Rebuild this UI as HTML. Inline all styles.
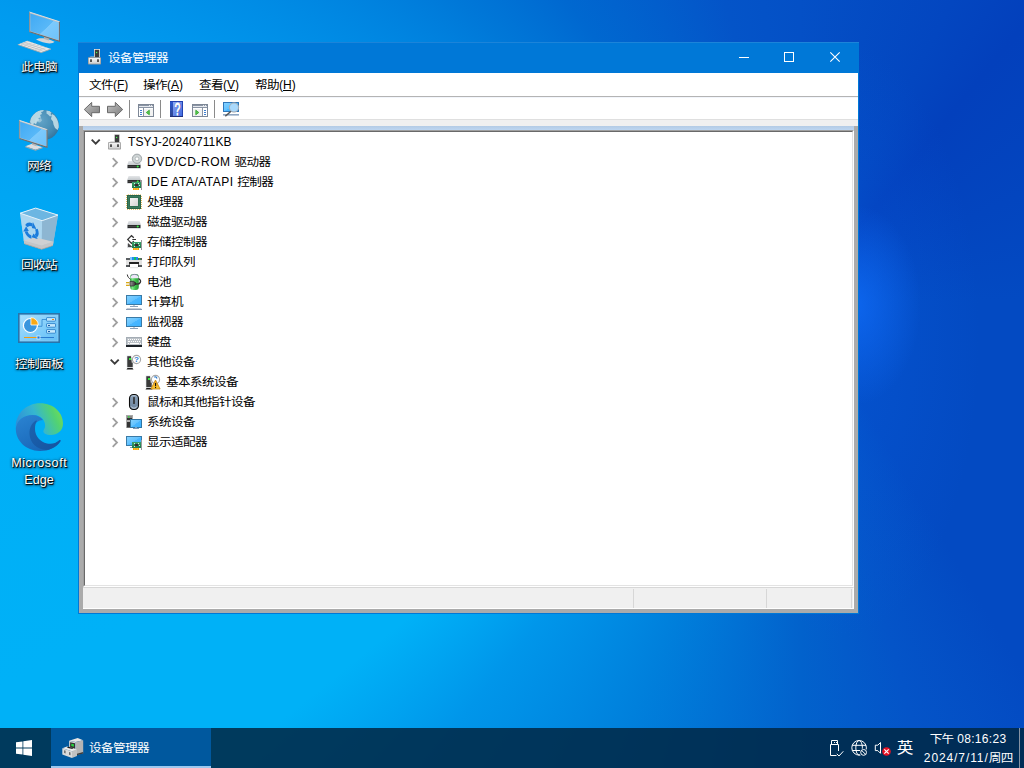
<!DOCTYPE html>
<html lang="zh-CN">
<head>
<meta charset="utf-8">
<title>设备管理器</title>
<style>
html,body{margin:0;padding:0;}
body{width:1024px;height:768px;overflow:hidden;position:relative;font-family:"Liberation Sans","Noto Sans CJK SC",sans-serif;font-size:12px;color:#000;}
.abs{position:absolute;}
svg{overflow:visible;}
#desk{position:absolute;left:0;top:0;width:1024px;height:768px;overflow:hidden;
 background:
  radial-gradient(ellipse 65px 100px at 856px 305px, rgba(14,104,242,.85), rgba(14,104,242,0) 100%),
  radial-gradient(ellipse 140px 300px at 840px 340px, rgba(8,96,225,.4), rgba(8,96,225,0) 100%),
  conic-gradient(from 0deg at 800px 300px,#0450c6 0deg,#0346c0 27deg,#0340bc 39deg,#034ac2 90deg,#034ac2 149deg,#0454c8 165deg,#0262cc 180deg,#0080dc 202deg,#0096ea 219deg,#00b1f7 231deg,#00b1f7 244deg,#00aef6 268deg,#00a6f3 277.5deg,#009cf0 289deg,#0078d8 311deg,#0068d0 322deg,#0454c8 346deg,#0450c6 360deg);
}
.dlabel{position:absolute;width:78px;left:0;text-align:center;color:#fff;font-size:12px;line-height:17px;white-space:nowrap;
 text-shadow:1px 1px 0 rgba(0,0,0,.8),1px 1px 2px rgba(0,0,0,.85),0 1px 3px rgba(0,0,0,.6),0 0 3px rgba(0,0,0,.45);}
#win{position:absolute;left:78px;top:42px;width:781px;height:572px;background:#0078d7;box-sizing:border-box;border-top:1px solid #1c84d9;}
#title{position:absolute;left:1px;top:0;width:779px;height:30px;background:#0078d7;color:#fff;}
#title .t{position:absolute;left:29px;top:0;line-height:29px;font-size:12px;}
#menu{position:absolute;left:1px;top:30px;width:779px;height:23px;background:#fff;}
#menu>span{position:absolute;top:0;line-height:22px;font-size:12px;white-space:nowrap;}
#menu u{text-decoration:underline;text-underline-offset:1px;}
#tb{position:absolute;left:1px;top:53px;width:779px;height:24px;background:#fff;border-top:1px solid #b4b4b4;border-bottom:1px solid #dfdfdf;box-sizing:border-box;box-shadow:inset 0 1px 0 #f2f5fb;}
#tb>svg{top:0}
#gap{position:absolute;left:1px;top:77px;width:779px;height:6px;background:#f0f0f0;}
#mdi{position:absolute;left:1px;top:83px;width:779px;height:487px;background:#ababab;}
#band{position:absolute;left:4px;top:0;width:771px;height:4px;background:linear-gradient(#b3cbe5,#bdd6f1);}
#tree{position:absolute;left:4px;top:4px;width:771px;height:457px;background:#fff;box-sizing:border-box;}
#tree .in{position:absolute;left:0;top:0;right:0;bottom:0;box-sizing:border-box;border-top:1px solid #a0a0a0;border-left:1px solid #a0a0a0;border-right:1px solid #fff;border-bottom:1px solid #fff;}
#tree .in:after{content:"";position:absolute;left:0;top:0;right:0;bottom:0;border-top:1px solid #696969;border-left:1px solid #696969;border-right:1px solid #e3e3e3;border-bottom:1px solid #e3e3e3;}
#status{position:absolute;left:4px;top:461px;width:771px;height:22px;background:#f0f0f0;border-top:1px solid #d7d7d7;box-sizing:border-box;border-bottom:1px solid #fff;border-right:1px solid #fff}
#status i{position:absolute;top:1px;width:1px;height:19px;background:#d7d7d7;}
.row{position:absolute;left:0;width:760px;height:20px;line-height:20px;font-size:12px;white-space:nowrap;}
.row .tx{position:absolute;top:0;}
#task{position:absolute;left:0;top:728px;width:1024px;height:40px;background:rgba(0,40,70,.87);color:#fff;}
#tbtn{position:absolute;left:51px;top:0;width:160px;height:40px;background:#00589e;}
#tbtn .ul{position:absolute;left:0;bottom:0;width:160px;height:2px;background:#9cc8f0;}
#tbtn .t{position:absolute;left:38px;top:0;line-height:40px;font-size:12px;}
.c{font-size:12.6px;letter-spacing:-.6px;position:relative;top:-0.5px;display:inline-block;transform:scaleY(.92);}
.row .tx{top:1px}
#title .t{line-height:31px}
#menu>span{line-height:24px}

</style>
</head>
<body>
<div id="desk"></div>
<!-- This PC -->
<svg class="abs" style="left:15px;top:8px" width="48" height="48" viewBox="15 8 48 48">
 <defs>
  <linearGradient id="dScr" x1="0" y1="0" x2="1" y2="1"><stop offset="0" stop-color="#40a9f3"/><stop offset=".55" stop-color="#58b8f8"/><stop offset=".56" stop-color="#7cc9fc"/><stop offset="1" stop-color="#6ec3fa"/></linearGradient>
 </defs>
 <path d="M36 39.5c4-3 14-.5 18.500 2.300c-2.500 3-12 1.500-18.500-2.300z" fill="#d4d6d8"/>
 <path d="M44 36.500l5 1.600v2.400l-5-1.600z" fill="#b2b4b6"/>
 <path d="M29.300 12L59.700 21.800V41.500L29.300 31.900Z" fill="#b9bbbd"/>
 <path d="M29.300 12L59.700 21.800" fill="none" stroke="#dcdee0" stroke-width="1"/>
 <path d="M59.400 21.800V41.300L29.500 31.800" fill="none" stroke="#6a6c6e" stroke-width="1.100"/>
 <path d="M29.500 12.200V31.800" fill="none" stroke="#8a8c8e" stroke-width=".8"/>
 <path d="M30.300 13.400L58.700 22.600V40.100L30.300 31.100Z" fill="url(#dScr)"/>
 <path d="M17.800 44.500L27.200 40.700L51 49L41.200 52.600Z" fill="#e6e7e8"/>
 <path d="M17.800 44.500L41.200 52.600L51 49" fill="none" stroke="#a9abad" stroke-width=".9"/>
 <path d="M21 44.300l8-3M24.500 45.500l8-3M28 46.700l8-3M31.500 47.900l8-3M35 49.100l8-3M38.500 50.300l8-3M23.500 42.200l22 7.600M20.600 43.400l22 7.600" stroke="#b4b6b8" stroke-width=".55" fill="none"/>
</svg>
<div class="dlabel" style="top:59px"><span class="c">此电脑</span></div>
<!-- Network -->
<svg class="abs" style="left:15px;top:107px" width="48" height="48" viewBox="15 107 48 48">
 <defs>
  <radialGradient id="dGlobe" cx=".4" cy=".35" r=".7"><stop offset="0" stop-color="#62a4c8"/><stop offset=".7" stop-color="#4489b1"/><stop offset="1" stop-color="#33729a"/></radialGradient>
 </defs>
 <circle cx="44" cy="125" r="15" fill="url(#dGlobe)"/>
 <clipPath id="gclip"><circle cx="44" cy="125" r="15"/></clipPath>
 <g clip-path="url(#gclip)" fill="#d6ebf1" opacity=".85">
  <path d="M30 122l1-4l2-3l3-3l4-2l4-.5l-1 2l-2 .5l1 2l-2 1l1 2.500l-2.500 .5l.5 2.500l-2 .5l-1 3l-2-1l-1 2l-2-1.500z" opacity=".9"/>
  <path d="M36 118l3 1l2-1l1 2.500l-2 2l-3-.5l-1 2.500l-1.500-1.500z" opacity=".55"/>
  <path d="M46.500 110.500l3 .5l2 1.500l-1 1.500l1.500 1.500l-2 1l-2-2l-1.500-1z" opacity=".85"/>
  <path d="M52 114l2.500 1.500l2.500 3.500l1.500 4l.5 4.500l-1.500 2.500l-2.500-2l-1.500-3.500l-.5-3l-2-2.500l.5-2.500z" opacity=".92"/>
 </g>
 <path d="M25.300 146.200L32 143.800L42.600 147.200L35.500 149.800Z" fill="#dcdee0"/><path d="M25.300 146.200L35.500 149.800L42.600 147.200V148.200L35.500 150.800L25.300 147.200Z" fill="#a4a6a8"/><path d="M32 142.500l4.500 1.400v2.300l-4.500-1.400z" fill="#b2b4b6"/>
 <path d="M19.200 120.300L47.300 129.700V147.500L19.200 138.600Z" fill="#b9bbbd"/>
 <path d="M19.200 120.300L47.300 129.700" fill="none" stroke="#dcdee0" stroke-width="1"/>
 <path d="M47 129.700V147.300L19.400 138.500" fill="none" stroke="#6a6c6e" stroke-width="1.100"/>
 <path d="M19.400 120.500V138.500" fill="none" stroke="#8a8c8e" stroke-width=".8"/>
 <path d="M20.200 121.700L46.300 130.500V146.100L20.200 137.800Z" fill="url(#dScr)"/>
</svg>
<div class="dlabel" style="top:158px"><span class="c">网络</span></div>
<!-- Recycle bin -->
<svg class="abs" style="left:15px;top:206px" width="48" height="48" viewBox="15 206 48 48">
 <path d="M20.100 213.200L35.600 208.100L58 215.100L52.900 245.600L41.700 249.300L24.300 243.700Z" fill="#8ec4e4"/>
 <path d="M20.100 213.200L35.600 208.100L58 215.100L42.100 220.700Z" fill="#6cb6e2"/>
 <path d="M20.100 213.200L42.100 220.700L41.700 249.300L24.300 243.700Z" fill="#abd6f0"/>
 <path d="M42.100 220.700L58 215.100L52.900 245.600L41.700 249.300Z" fill="#8db6d2"/>
 <path d="M23.600 239.800L41.800 245.300L53.400 241.600L52.900 245.600L41.700 249.300L24.300 243.700Z" fill="#c4c5c7"/>
 <path d="M23.800 240.500l11-3.300L53.300 241.800L41.800 245.400Z" fill="#cfd0d2"/><path d="M24.300 243.700L41.700 249.300L52.900 245.600" fill="none" stroke="#a39a92" stroke-width=".7"/>
 <path d="M20.100 213.200L35.600 208.100L58 215.100L42.100 220.700Z" fill="none" stroke="#e4f2fa" stroke-width="1"/>
 <g transform="translate(31.400 230.800) skewY(17) scale(1.02 1.12)"><g transform="rotate(15)"><path d="M-5.41 -1.45A5.6 5.6 0 0 1 -0.49 -5.58" fill="none" stroke="#1b7cdc" stroke-width="2.900"/><path d="M-0.74 -8.47L3.96 -4.24L-0.24 -2.69Z" fill="#1b7cdc"/></g><g transform="rotate(135)"><path d="M-5.41 -1.45A5.6 5.6 0 0 1 -0.49 -5.58" fill="none" stroke="#1b7cdc" stroke-width="2.900"/><path d="M-0.74 -8.47L3.96 -4.24L-0.24 -2.69Z" fill="#1b7cdc"/></g><g transform="rotate(255)"><path d="M-5.41 -1.45A5.6 5.6 0 0 1 -0.49 -5.58" fill="none" stroke="#1b7cdc" stroke-width="2.900"/><path d="M-0.74 -8.47L3.96 -4.24L-0.24 -2.69Z" fill="#1b7cdc"/></g></g>
</svg>
<div class="dlabel" style="top:257px"><span class="c">回收站</span></div>
<!-- Control panel -->
<svg class="abs" style="left:15px;top:305px" width="48" height="48" viewBox="15 305 48 48">
 <defs><linearGradient id="dCp" x1="0" y1="0" x2="1" y2="1"><stop offset="0" stop-color="#a8e0ff"/><stop offset="1" stop-color="#62bef6"/></linearGradient></defs>
 <rect x="18" y="313" width="42" height="30" fill="#2874ac"/>
 <rect x="20" y="315" width="38" height="26" fill="url(#dCp)"/>
 <rect x="20" y="315" width="38" height="26" fill="none" stroke="#8fd0f6" stroke-width=".8"/>
 <circle cx="30.400" cy="325.500" r="7" fill="#3a96de" stroke="#fff" stroke-width="1.2"/>
 <path d="M30.900 325V317.600A7.400 7.400 0 0 1 38.300 325Z" fill="#f9a916" stroke="#fff" stroke-width=".8"/>
 <path d="M38 326.300H42V319.500H47" fill="none" stroke="#2f86d0" stroke-width=".8"/>
 <g fill="#c4e8fd" stroke="#2f84cc" stroke-width=".9"><rect x="46.500" y="317.600" width="9" height="3.600" rx=".5"/><rect x="46.500" y="323.600" width="9" height="3.600" rx=".5"/><rect x="46.500" y="329.600" width="9" height="3.600" rx=".5"/></g>
 <rect x="52" y="319" width="2" height="1" fill="#f08a10"/><rect x="48" y="325" width="2" height="1" fill="#1c5ea8"/><rect x="48" y="331" width="2" height="1" fill="#1c5ea8"/>
 <rect x="24" y="337" width="13" height="1" fill="#f59a12"/><rect x="40" y="337" width="14" height="1" fill="#2a7cd0"/>
 <rect x="37" y="336" width="3" height="3" fill="#1f78d8" stroke="#e8f6ff" stroke-width=".7"/>
</svg>
<div class="dlabel" style="top:356px"><span class="c">控制面板</span></div>
<!-- Edge -->
<svg class="abs" style="left:15px;top:403px" width="48" height="48" viewBox="0 0 48 48">
 <defs>
  <linearGradient id="eA" x1="0" y1=".6" x2="1" y2=".3"><stop offset="0" stop-color="#2f8fd8"/><stop offset=".45" stop-color="#35b6d0"/><stop offset=".8" stop-color="#52d273"/><stop offset="1" stop-color="#73dd55"/></linearGradient>
  <linearGradient id="eB" x1="0" y1="0" x2=".6" y2="1"><stop offset="0" stop-color="#2b84d2"/><stop offset="1" stop-color="#1866b8"/></linearGradient>
  <linearGradient id="eC" x1="0" y1="0" x2="1" y2="1"><stop offset="0" stop-color="#1c63ae"/><stop offset="1" stop-color="#1553a0"/></linearGradient>
 </defs>
 <path d="M.8 25C.3 11 11 .3 25 .3C39 .3 48 10 48 20.500C48 28 42 32 36 32C31 32 27.500 30 28.500 27.500C29.500 25.500 30.500 24 30 21C29 15 24 12 18 12C9 12 2 17 .8 25Z" fill="url(#eA)"/>
 <path d="M.8 25C2 17 9 12 17.500 12C22 12 26 14 28 17C24 17 19 20 18 26C17 34 23 42 33 42C38 42 42 40 44 37.500C45 36.500 46 37.500 45.300 38.500C41 45 33 48.200 24.500 48C11 47.500 .5 38 .8 25Z" fill="url(#eB)"/>
 <path d="M20.500 17.800C17 20 14 25 14.500 31C15 40 22 46.500 31 47C37 46.500 42 43 45.300 38.500C46 37.500 45 36.500 44 37.500C41 40 37 41.500 32 40.500C25 39 20 33 20 26C20 22.500 20.500 20 22 18C21.500 17.500 21 17.500 20.500 17.800Z" fill="url(#eC)"/>
</svg>
<div class="dlabel" style="top:455px"><span style="font-size:12.600px;letter-spacing:.55px;margin-left:.5px">Microsoft</span><br><span style="font-size:12.600px;letter-spacing:.05px">Edge</span></div>

<div id="win">
 <div id="title">
  <svg class="abs" style="left:7px;top:5px" width="16" height="18" viewBox="0 0 16 18"><rect x="8" y="1" width="6" height="8.5" fill="#e8e8e8"/><rect x="8.8" y="1.8" width="4.4" height="7.5" fill="#3c3c3c"/><rect x="10" y="3.900" width="1.200" height="1.200" fill="#48ff50"/><path d="M2 9.5l3-1h3v1z" fill="#bdbdbd"/><rect x="2" y="9.3" width="13" height="7.2" rx=".8" fill="#9c9c9c"/><rect x="2.8" y="10" width="11.4" height="5.6" fill="url(#gBase)"/><rect x="4.2" y="11.3" width="1.6" height="2.7" fill="#333"/><rect x="11.2" y="11.3" width="1.6" height="2.7" fill="#333"/></svg>
  <span class="t"><span class="c">设备管理器</span></span>
  <svg class="abs" style="left:646px;top:0" width="133" height="30" viewBox="725 43 133 30"><g fill="none" stroke="#fff" stroke-width="1"><path d="M739 57.500H749"/><rect x="784.500" y="52.500" width="9" height="9"/><path d="M830.300 52.300L839.700 61.700M839.700 52.300L830.300 61.700" stroke-width="1.100"/></g></svg>
 </div>
 <div id="menu">
  <span style="left:10px"><span class="c">文件</span>(<u>F</u>)</span>
  <span style="left:64px"><span class="c">操作</span>(<u>A</u>)</span>
  <span style="left:120px"><span class="c">查看</span>(<u>V</u>)</span>
  <span style="left:176px"><span class="c">帮助</span>(<u>H</u>)</span>
 </div>
 <div id="tb">
<svg class="abs" style="left:0;top:0" width="200" height="23" viewBox="79 97 200 23">
 <!-- back / forward arrows -->
 <path d="M84.3 109.5L91.7 102.4V106.3H99.5V112.7H91.7V116.6Z" fill="url(#gArr)" stroke="#6a6a6a" stroke-width="1" stroke-linejoin="round"/>
 <path d="M122.7 109.5L115.3 102.4V106.3H107.5V112.7H115.3V116.6Z" fill="url(#gArr)" stroke="#6a6a6a" stroke-width="1" stroke-linejoin="round"/>
 <rect x="129" y="100" width="1" height="18" fill="#8a8a8a"/>
 <rect x="160" y="100" width="1" height="18" fill="#8a8a8a"/>
 <rect x="214" y="100" width="1" height="18" fill="#8a8a8a"/>
 <!-- show/hide console tree -->
 <g>
  <rect x="138.5" y="104.5" width="15" height="12" fill="#fff" stroke="#7d8796"/>
  <rect x="139" y="105" width="14" height="3" fill="#e6e9ee"/>
  <rect x="139" y="105" width="10" height="1" fill="#8a94a4"/><rect x="150" y="105" width="1" height="1" fill="#8a94a4"/><rect x="152" y="105" width="1" height="1" fill="#8a94a4"/>
  <rect x="139" y="107" width="14" height="1" fill="#8a94a4"/>
  <rect x="143" y="108" width="1" height="8" fill="#8a94a4"/>
  <rect x="140" y="110" width="2" height="1" fill="#3f7fd0"/><rect x="140" y="112" width="2" height="1" fill="#3f7fd0"/><rect x="140" y="114" width="2" height="1" fill="#3f7fd0"/>
  <rect x="144" y="109" width="9" height="7" fill="#f2f2f2"/>
  <path d="M149.300 110.200V114.800L146.300 112.500Z" fill="#5cc850" stroke="#2da528" stroke-width=".8" stroke-linejoin="round"/>
 </g>
 <g>
  <rect x="192.5" y="104.5" width="15" height="12" fill="#fff" stroke="#7d8796"/>
  <rect x="193" y="105" width="14" height="3" fill="#e6e9ee"/>
  <rect x="193" y="105" width="10" height="1" fill="#8a94a4"/><rect x="204" y="105" width="1" height="1" fill="#8a94a4"/><rect x="206" y="105" width="1" height="1" fill="#8a94a4"/>
  <rect x="193" y="107" width="14" height="1" fill="#8a94a4"/>
  <rect x="202" y="108" width="1" height="8" fill="#8a94a4"/>
  <rect x="204" y="110" width="2" height="1" fill="#3f7fd0"/><rect x="204" y="112" width="2" height="1" fill="#3f7fd0"/><rect x="204" y="114" width="2" height="1" fill="#3f7fd0"/>
  <rect x="193" y="109" width="9" height="7" fill="#f2f2f2"/>
  <path d="M195.800 110.200V114.800L198.800 112.500Z" fill="#5cc850" stroke="#2da528" stroke-width=".8" stroke-linejoin="round"/>
 </g>
 <!-- help -->
 <rect x="170" y="101" width="13" height="16" fill="#2242b2"/>
 <rect x="173" y="102" width="9" height="14" fill="url(#gHelp)"/>
 <rect x="170" y="102" width="3" height="14" fill="url(#gSpine)"/>
 <rect x="170" y="116" width="13" height="1" fill="#1f2f78"/>
 <text transform="translate(178.200 115.300) scale(.7 1.12)" font-size="14.300" text-anchor="middle" fill="#16225c" opacity=".8" font-family="Liberation Sans,sans-serif">?</text>
 <text transform="translate(177.500 114.800) scale(.7 1.12)" font-size="14.300" text-anchor="middle" fill="#fff" stroke="#fff" stroke-width=".8" font-family="Liberation Sans,sans-serif">?</text>
 <!-- scan -->
 <rect x="223.5" y="102.5" width="15" height="9" fill="url(#gScr)" stroke="#2f76b8"/>
 <rect x="223" y="114" width="16" height="1.6" fill="#8ea6c2"/>
 <path d="M231 111.2L225.3 116.3" stroke="#555" stroke-width="1.5" fill="none"/>
 <circle cx="234" cy="107.500" r="4.600" fill="#a9d9fc" stroke="#a9acb0" stroke-width="1"/>
</svg>

 </div>
 <div id="gap"></div>
 <div id="mdi">
  <div id="band"></div>
  <div id="tree"><div class="in"></div>
<svg width="0" height="0" style="position:absolute"><defs>
<linearGradient id="gTop" x1="0" y1="0" x2="0" y2="1"><stop offset="0" stop-color="#e4e6e8"/><stop offset="1" stop-color="#c4c8cc"/></linearGradient>
<linearGradient id="gPcb" x1="0" y1="0" x2="0" y2="1"><stop offset="0" stop-color="#3aa06a"/><stop offset="1" stop-color="#1f7a4a"/></linearGradient>
<linearGradient id="gScr" x1="0" y1="0" x2="1" y2="1"><stop offset="0" stop-color="#86d2ff"/><stop offset=".5" stop-color="#62c2ff"/><stop offset=".52" stop-color="#48b6ff"/><stop offset="1" stop-color="#3cb2ff"/></linearGradient>
<linearGradient id="gBase" x1="0" y1="0" x2="0" y2="1"><stop offset="0" stop-color="#f4f4f4"/><stop offset="1" stop-color="#d2d2d2"/></linearGradient>
<radialGradient id="gDisc"><stop offset="0" stop-color="#f4f6f6"/><stop offset=".6" stop-color="#d4dada"/><stop offset="1" stop-color="#c2c8ca"/></radialGradient>
<linearGradient id="gDie" x1="0" y1="0" x2="1" y2="1"><stop offset="0" stop-color="#f6f4f4"/><stop offset="1" stop-color="#d6d4d4"/></linearGradient>
<linearGradient id="gBat" x1="0" y1="0" x2="1" y2="0"><stop offset="0" stop-color="#2fa83e"/><stop offset=".25" stop-color="#7fe888"/><stop offset=".6" stop-color="#3cc04a"/><stop offset="1" stop-color="#2a9838"/></linearGradient>
<linearGradient id="gPlug" x1="0" y1="0" x2="1" y2="0"><stop offset="0" stop-color="#9a9a9a"/><stop offset="1" stop-color="#2a2a2a"/></linearGradient>
<linearGradient id="gWarn" x1="0" y1="0" x2="0" y2="1"><stop offset="0" stop-color="#f0a010"/><stop offset="1" stop-color="#f8c838"/></linearGradient>
<linearGradient id="gMouse" x1="0" y1="0" x2="0" y2="1"><stop offset="0" stop-color="#8aa0b8"/><stop offset="1" stop-color="#6c849e"/></linearGradient>
<linearGradient id="gArr" x1="0" y1="0" x2="1" y2="1"><stop offset="0" stop-color="#c2c2c2"/><stop offset="1" stop-color="#7c7c7c"/></linearGradient>
<linearGradient id="gHelp" x1="0" y1="0" x2="1" y2="1"><stop offset="0" stop-color="#8ea8f0"/><stop offset="1" stop-color="#406ae0"/></linearGradient>
<linearGradient id="gSpine" x1="0" y1="0" x2="0" y2="1"><stop offset="0" stop-color="#2a58d0"/><stop offset="1" stop-color="#2f4690"/></linearGradient>
</defs></svg>
<div class="row" style="top:1px"><svg class="abs" style="left:8px;top:7px" width="10" height="7" viewBox="0 0 10 7"><path d="M.7 1.6L4.700 5.600L8.700 1.600" fill="none" stroke="#3c3c3c" stroke-width="1.900"/></svg><svg class="abs ic" style="left:23px;top:2px" width="16" height="18" viewBox="0 0 16 18"><rect x="8" y="1" width="6" height="8.5" fill="#e8e8e8"/><rect x="8.8" y="1.8" width="4.4" height="7.5" fill="#3c3c3c"/><rect x="10" y="3.900" width="1.200" height="1.200" fill="#48ff50"/><path d="M2 9.5l3-1h3v1z" fill="#bdbdbd"/><rect x="2" y="9.3" width="13" height="7.2" rx=".8" fill="#9c9c9c"/><rect x="2.8" y="10" width="11.4" height="5.6" fill="url(#gBase)"/><rect x="4.2" y="11.3" width="1.6" height="2.7" fill="#333"/><rect x="11.2" y="11.3" width="1.6" height="2.7" fill="#333"/></svg><span class="tx" style="left:45px"><span style="letter-spacing:.12px">TSYJ-20240711KB</span></span></div>
<div class="row" style="top:21px"><svg class="abs" style="left:29px;top:6px" width="6" height="11" viewBox="0 0 6 11"><path d="M.7 1.200L5 5.500L.7 9.800" fill="none" stroke="#a0a0a0" stroke-width="1.800"/></svg><svg class="abs ic" style="left:43px;top:2px" width="16" height="18" viewBox="0 0 16 18"><path d="M2.600 8h11l1.400 4h-13.800z" fill="url(#gTop)"/><rect x="1" y="12" width="14" height="3.700" rx=".6" fill="#d0d4d8"/><rect x="1.600" y="12" width="12.800" height="3" fill="#2b2b2b"/><rect x="2.200" y="13.2" width="8" height=".6" fill="#555"/><circle cx="11.700" cy="13.5" r="1.100" fill="#3be84a"/><circle cx="11" cy="5.8" r="4.7" fill="url(#gDisc)" stroke="#969ca0" stroke-width=".8"/><circle cx="11" cy="5.8" r="2" fill="none" stroke="#a4aaae" stroke-width=".7"/><circle cx="11" cy="5.8" r="1.1" fill="#fff"/></svg><span class="tx" style="left:64px"><span style="letter-spacing:.56px">DVD/CD-ROM </span><span class="c">驱动器</span></span></div>
<div class="row" style="top:41px"><svg class="abs" style="left:29px;top:6px" width="6" height="11" viewBox="0 0 6 11"><path d="M.7 1.200L5 5.500L.7 9.800" fill="none" stroke="#a0a0a0" stroke-width="1.800"/></svg><svg class="abs ic" style="left:43px;top:2px" width="16" height="18" viewBox="0 0 16 18"><path d="M2.600 3h11l1.400 4h-13.800z" fill="url(#gTop)"/><rect x="1" y="7" width="14" height="3.700" rx=".6" fill="#d0d4d8"/><rect x="1.600" y="7" width="12.800" height="3" fill="#2b2b2b"/><rect x="2.200" y="8.2" width="8" height=".6" fill="#555"/><circle cx="11.700" cy="8.5" r="1.100" fill="#3be84a"/><rect x="15" y="7" width="1" height="10" fill="#9a9a9a"/><rect x="6" y="9" width="9" height="6" fill="url(#gPcb)"/><rect x="9" y="11" width="3" height="2" fill="#3a2a30"/><rect x="8" y="10" width="1" height="1" fill="#d8e8dc"/><rect x="12" y="10" width="1" height="1" fill="#d8e8dc"/><rect x="8" y="13" width="1" height="1" fill="#d8e8dc"/><rect x="13" y="12" width="1" height="1" fill="#d8e8dc"/><rect x="7" y="15" width="6" height="2" fill="#f5a800"/><path d="M8.500 15v2M10 15v2M11.500 15v2" stroke="#fbd070" stroke-width=".5"/></svg><span class="tx" style="left:64px"><span style="letter-spacing:.46px">IDE ATA/ATAPI </span><span class="c">控制器</span></span></div>
<div class="row" style="top:61px"><svg class="abs" style="left:29px;top:6px" width="6" height="11" viewBox="0 0 6 11"><path d="M.7 1.200L5 5.500L.7 9.800" fill="none" stroke="#a0a0a0" stroke-width="1.800"/></svg><svg class="abs ic" style="left:43px;top:2px" width="16" height="18" viewBox="0 0 16 18"><rect x="1.8" y="1.2" width="1" height="1" rx=".5" fill="#d9a32a"/><rect x="1" y="15.8" width="1" height="1" rx=".5" fill="#d9a32a"/><rect x="0" y="2" width="1" height="1" rx=".5" fill="#d9a32a"/><rect x="15" y="3" width="1" height="1" rx=".5" fill="#d9a32a"/><rect x="3.8" y="1.2" width="1" height="1" rx=".5" fill="#d9a32a"/><rect x="3" y="15.8" width="1" height="1" rx=".5" fill="#d9a32a"/><rect x="0" y="4" width="1" height="1" rx=".5" fill="#d9a32a"/><rect x="15" y="5" width="1" height="1" rx=".5" fill="#d9a32a"/><rect x="5.8" y="1.2" width="1" height="1" rx=".5" fill="#d9a32a"/><rect x="5" y="15.8" width="1" height="1" rx=".5" fill="#d9a32a"/><rect x="0" y="6" width="1" height="1" rx=".5" fill="#d9a32a"/><rect x="15" y="7" width="1" height="1" rx=".5" fill="#d9a32a"/><rect x="7.8" y="1.2" width="1" height="1" rx=".5" fill="#d9a32a"/><rect x="7" y="15.8" width="1" height="1" rx=".5" fill="#d9a32a"/><rect x="0" y="8" width="1" height="1" rx=".5" fill="#d9a32a"/><rect x="15" y="9" width="1" height="1" rx=".5" fill="#d9a32a"/><rect x="9.8" y="1.2" width="1" height="1" rx=".5" fill="#d9a32a"/><rect x="9" y="15.8" width="1" height="1" rx=".5" fill="#d9a32a"/><rect x="0" y="10" width="1" height="1" rx=".5" fill="#d9a32a"/><rect x="15" y="11" width="1" height="1" rx=".5" fill="#d9a32a"/><rect x="11.8" y="1.2" width="1" height="1" rx=".5" fill="#d9a32a"/><rect x="11" y="15.8" width="1" height="1" rx=".5" fill="#d9a32a"/><rect x="0" y="12" width="1" height="1" rx=".5" fill="#d9a32a"/><rect x="15" y="13" width="1" height="1" rx=".5" fill="#d9a32a"/><rect x="13.8" y="1.2" width="1" height="1" rx=".5" fill="#d9a32a"/><rect x="13" y="15.8" width="1" height="1" rx=".5" fill="#d9a32a"/><rect x="0" y="14" width="1" height="1" rx=".5" fill="#d9a32a"/><rect x="15" y="15" width="1" height="1" rx=".5" fill="#d9a32a"/><rect x="1" y="2" width="14" height="14" fill="#2a6449"/><rect x="2" y="3" width="12" height="12" fill="#3a7a5c"/><rect x="3" y="4" width="10" height="10" fill="#2f6e51"/><rect x="4" y="5" width="8" height="8" fill="url(#gDie)"/></svg><span class="tx" style="left:64px"><span class="c">处理器</span></span></div>
<div class="row" style="top:81px"><svg class="abs" style="left:29px;top:6px" width="6" height="11" viewBox="0 0 6 11"><path d="M.7 1.200L5 5.500L.7 9.800" fill="none" stroke="#a0a0a0" stroke-width="1.800"/></svg><svg class="abs ic" style="left:43px;top:2px" width="16" height="18" viewBox="0 0 16 18"><path d="M2.600 8h11l1.400 4h-13.800z" fill="url(#gTop)"/><rect x="1" y="12" width="14" height="3.700" rx=".6" fill="#d0d4d8"/><rect x="1.600" y="12" width="12.800" height="3" fill="#2b2b2b"/><rect x="2.200" y="13.2" width="8" height=".6" fill="#555"/><circle cx="11.700" cy="13.5" r="1.100" fill="#3be84a"/></svg><span class="tx" style="left:64px"><span class="c">磁盘驱动器</span></span></div>
<div class="row" style="top:101px"><svg class="abs" style="left:29px;top:6px" width="6" height="11" viewBox="0 0 6 11"><path d="M.7 1.200L5 5.500L.7 9.800" fill="none" stroke="#a0a0a0" stroke-width="1.800"/></svg><svg class="abs ic" style="left:43px;top:2px" width="16" height="18" viewBox="0 0 16 18"><path d="M7.800 4.800L5.500 2.700L1.700 6.500L5.500 10.300L7.800 8.200M6.300 6.500H10" fill="none" stroke="#333" stroke-width="1.200"/><path d="M2 10l4.500 4H2z" fill="#4a4a4a"/><path d="M1.500 10.500v4h5" fill="none" stroke="#c8ccd0" stroke-width=".8"/><rect x="15" y="7" width="1" height="10" fill="#9a9a9a"/><rect x="6" y="9" width="9" height="6" fill="url(#gPcb)"/><rect x="9" y="11" width="3" height="2" fill="#3a2a30"/><rect x="8" y="10" width="1" height="1" fill="#d8e8dc"/><rect x="12" y="10" width="1" height="1" fill="#d8e8dc"/><rect x="8" y="13" width="1" height="1" fill="#d8e8dc"/><rect x="13" y="12" width="1" height="1" fill="#d8e8dc"/><rect x="7" y="15" width="6" height="2" fill="#f5a800"/><path d="M8.500 15v2M10 15v2M11.500 15v2" stroke="#fbd070" stroke-width=".5"/></svg><span class="tx" style="left:64px"><span class="c">存储控制器</span></span></div>
<div class="row" style="top:121px"><svg class="abs" style="left:29px;top:6px" width="6" height="11" viewBox="0 0 6 11"><path d="M.7 1.200L5 5.500L.7 9.800" fill="none" stroke="#a0a0a0" stroke-width="1.800"/></svg><svg class="abs ic" style="left:43px;top:2px" width="16" height="18" viewBox="0 0 16 18"><rect x="4" y="4" width="8" height="3.5" fill="#1e8df0"/><rect x="4" y="4" width="2" height="3.5" fill="#7cc8ff"/><rect x="8" y="4" width="2" height="3.5" fill="#15c060"/><rect x="0" y="5" width="4" height="2" fill="#5a5e62"/><rect x="12" y="5" width="4" height="2" fill="#5a5e62"/><rect x="0" y="7" width="16" height="6" fill="#e2e2e2"/><rect x="0" y="12" width="16" height="2" fill="#54585c"/><rect x="13" y="5.5" width="1.4" height="1.4" fill="#1ee030"/><rect x="3" y="9" width="10" height="2.2" fill="#222"/><path d="M3.5 11h9v3h-9z" fill="#222"/><rect x="4" y="11" width="8" height="4" fill="#fff"/><rect x="4" y="14.5" width="8" height=".6" fill="#ccc"/></svg><span class="tx" style="left:64px"><span class="c">打印队列</span></span></div>
<div class="row" style="top:141px"><svg class="abs" style="left:29px;top:6px" width="6" height="11" viewBox="0 0 6 11"><path d="M.7 1.200L5 5.500L.7 9.800" fill="none" stroke="#a0a0a0" stroke-width="1.800"/></svg><svg class="abs ic" style="left:43px;top:2px" width="16" height="18" viewBox="0 0 16 18"><path d="M1.3 1.5C1.5 4 3 5 5 7" fill="none" stroke="#333" stroke-width="1"/><rect x="4.2" y="1" width="8.6" height="16" rx="3" fill="url(#gBat)"/><path d="M4.6 4.2c0-4 7.8-4 7.8 0v1H4.6z" fill="#eee8f8"/><path d="M5 2.6c2-1.6 5-1.6 7 0" fill="none" stroke="#77739a" stroke-width=".8"/><path d="M12.5 5.5c3.5 2 2.5 6.5-3.5 5.5" fill="none" stroke="#333" stroke-width="1.3"/><path d="M4 8.3h3.5l2.5 1.7v1.2l-2.5 1.8H4z" fill="url(#gPlug)" stroke="#222" stroke-width=".7"/><rect x="0" y="9" width="3.5" height="1.3" fill="#d8a818"/><rect x="0" y="11.7" width="3.5" height="1.3" fill="#d8a818"/></svg><span class="tx" style="left:64px"><span class="c">电池</span></span></div>
<div class="row" style="top:161px"><svg class="abs" style="left:29px;top:6px" width="6" height="11" viewBox="0 0 6 11"><path d="M.7 1.200L5 5.500L.7 9.800" fill="none" stroke="#a0a0a0" stroke-width="1.800"/></svg><svg class="abs ic" style="left:43px;top:2px" width="16" height="18" viewBox="0 0 16 18"><rect x=".5" y="2.5" width="15" height="9" fill="url(#gScr)" stroke="#3a7aa6"/><rect x="7" y="12" width="2" height="1" fill="#c8d0d8"/><rect x="4" y="13" width="8" height="1" fill="#8aa0b8"/><path d="M1 15l-1 1.5h16L15 15z" fill="#c4ccd6"/><rect x="0" y="16" width="16" height="1" fill="#8c9cb2"/></svg><span class="tx" style="left:64px"><span class="c">计算机</span></span></div>
<div class="row" style="top:181px"><svg class="abs" style="left:29px;top:6px" width="6" height="11" viewBox="0 0 6 11"><path d="M.7 1.200L5 5.500L.7 9.800" fill="none" stroke="#a0a0a0" stroke-width="1.800"/></svg><svg class="abs ic" style="left:43px;top:2px" width="16" height="18" viewBox="0 0 16 18"><rect x=".5" y="4.5" width="15" height="9" fill="url(#gScr)" stroke="#3a7aa6"/><rect x="7" y="14" width="2" height="1" fill="#c8d0d8"/><rect x="4" y="15" width="8" height="1" fill="#8aa0b8"/></svg><span class="tx" style="left:64px"><span class="c">监视器</span></span></div>
<div class="row" style="top:201px"><svg class="abs" style="left:29px;top:6px" width="6" height="11" viewBox="0 0 6 11"><path d="M.7 1.200L5 5.500L.7 9.800" fill="none" stroke="#a0a0a0" stroke-width="1.800"/></svg><svg class="abs ic" style="left:43px;top:2px" width="16" height="18" viewBox="0 0 16 18"><rect x="0" y="4" width="16" height="10" fill="#a4acb4"/><rect x="1" y="5" width="14" height="7" fill="#bcc2c8"/><rect x="2" y="6" width="1" height="1" fill="#fff"/><rect x="4" y="6" width="1" height="1" fill="#fff"/><rect x="6" y="6" width="1" height="1" fill="#fff"/><rect x="8" y="6" width="1" height="1" fill="#fff"/><rect x="10" y="6" width="1" height="1" fill="#fff"/><rect x="12" y="6" width="1" height="1" fill="#fff"/><rect x="14" y="6" width="1" height="1" fill="#fff"/><rect x="2" y="8" width="1" height="1" fill="#fff"/><rect x="3" y="8" width="1" height="1" fill="#fff"/><rect x="5" y="8" width="1" height="1" fill="#fff"/><rect x="7" y="8" width="1" height="1" fill="#fff"/><rect x="9" y="8" width="1" height="1" fill="#fff"/><rect x="11" y="8" width="1" height="1" fill="#fff"/><rect x="13" y="8" width="1" height="1" fill="#fff"/><rect x="2" y="10" width="1" height="1" fill="#fff"/><rect x="4" y="10" width="1" height="1" fill="#fff"/><rect x="6" y="10" width="1" height="1" fill="#fff"/><rect x="8" y="10" width="1" height="1" fill="#fff"/><rect x="10" y="10" width="1" height="1" fill="#fff"/><rect x="12" y="10" width="1" height="1" fill="#fff"/><rect x="14" y="10" width="1" height="1" fill="#fff"/><rect x="4" y="10" width="8" height="1" fill="#fff"/><rect x="0" y="12" width="16" height="2" fill="#1c2228"/></svg><span class="tx" style="left:64px"><span class="c">键盘</span></span></div>
<div class="row" style="top:221px"><svg class="abs" style="left:27px;top:7px" width="10" height="7" viewBox="0 0 10 7"><path d="M.7 1.6L4.700 5.600L8.700 1.600" fill="none" stroke="#3c3c3c" stroke-width="1.900"/></svg><svg class="abs ic" style="left:43px;top:2px" width="16" height="18" viewBox="0 0 16 18"><rect x=".7" y="2.5" width="6.6" height="12" fill="#dfe3e8"/><path d="M1.3 3.2h5.4v11H1.3z" fill="#3a3a3a"/><rect x="3" y="5" width="2.2" height="2" fill="#35e83c"/><path d="M1.5 15h5l1 1.5h-7z" fill="#1e1e1e"/><path d="M5 2.5h4v6l-3.2 1.2z" fill="#fff"/><circle cx="10.5" cy="6.5" r="4.1" fill="#fff" stroke="#a8a8a8" stroke-width="1.100"/><text x="10.5" y="9.3" font-size="8" font-weight="bold" text-anchor="middle" fill="#2b7bd0" font-family="Liberation Sans,sans-serif">?</text></svg><span class="tx" style="left:64px"><span class="c">其他设备</span></span></div>
<div class="row" style="top:241px"><svg class="abs ic" style="left:62px;top:2px" width="16" height="18" viewBox="0 0 16 18"><rect x=".7" y="2.5" width="6.6" height="12" fill="#dfe3e8"/><path d="M1.3 3.2h5.4v11H1.3z" fill="#3a3a3a"/><rect x="3" y="5" width="2.2" height="2" fill="#35e83c"/><path d="M1.5 15h5l1 1.5h-7z" fill="#1e1e1e"/><path d="M5 2.5h4v6l-3.2 1.2z" fill="#fff"/><circle cx="10.5" cy="6.5" r="4.1" fill="#fff" stroke="#a8a8a8" stroke-width="1.100"/><path d="M9.3 4.3c1.2-1 2.8-.3 2.4 1.4" fill="none" stroke="#2b7bd0" stroke-width="1.2"/><path d="M10.5 7l4.6 9H5.9z" fill="url(#gWarn)" stroke="#c08410" stroke-width=".8" stroke-linejoin="round"/><rect x="10" y="10" width="1.1" height="3.2" fill="#111"/><rect x="10" y="14" width="1.1" height="1.1" fill="#111"/></svg><span class="tx" style="left:83px"><span class="c">基本系统设备</span></span></div>
<div class="row" style="top:261px"><svg class="abs" style="left:29px;top:6px" width="6" height="11" viewBox="0 0 6 11"><path d="M.7 1.200L5 5.500L.7 9.800" fill="none" stroke="#a0a0a0" stroke-width="1.800"/></svg><svg class="abs ic" style="left:43px;top:2px" width="16" height="18" viewBox="0 0 16 18"><rect x="3.5" y="1.5" width="9" height="15" rx="4" fill="url(#gMouse)" stroke="#0a0a0a" stroke-width="1.1"/><path d="M5 13.5c1.5 2.2 4.5 2.2 6 0" fill="none" stroke="#e8eef4" stroke-width=".8"/><rect x="7.200" y="4" width="1.600" height="7" rx=".6" fill="#2c2c2c"/><path d="M5.500 3.500c1.200-1.300 3.800-1.300 5 0" fill="none" stroke="#c4d2e0" stroke-width=".7"/></svg><span class="tx" style="left:64px"><span class="c">鼠标和其他指针设备</span></span></div>
<div class="row" style="top:281px"><svg class="abs" style="left:29px;top:6px" width="6" height="11" viewBox="0 0 6 11"><path d="M.7 1.200L5 5.500L.7 9.800" fill="none" stroke="#a0a0a0" stroke-width="1.800"/></svg><svg class="abs ic" style="left:43px;top:2px" width="16" height="18" viewBox="0 0 16 18"><rect x="0" y="2" width="7" height="13" fill="#a8a8a8"/><rect x="1" y="3" width="5" height="11.5" fill="#333"/><rect x="1" y="3" width="5" height="2" fill="#8a8a8a"/><rect x="1" y="7" width="5" height="2" fill="#b0b0b0"/><rect x="2" y="3.2" width="1.4" height="1.4" fill="#30e838"/><rect x="4.5" y="6.5" width="11" height="8" fill="url(#gScr)" stroke="#2f76a4"/><rect x="9" y="14.500" width="2" height=".6" fill="#c8d0d8"/><rect x="7" y="15" width="6" height=".9" fill="#6f8cb0"/></svg><span class="tx" style="left:64px"><span class="c">系统设备</span></span></div>
<div class="row" style="top:301px"><svg class="abs" style="left:29px;top:6px" width="6" height="11" viewBox="0 0 6 11"><path d="M.7 1.200L5 5.500L.7 9.800" fill="none" stroke="#a0a0a0" stroke-width="1.800"/></svg><svg class="abs ic" style="left:43px;top:2px" width="16" height="18" viewBox="0 0 16 18"><rect x=".5" y="3.5" width="15" height="9" fill="url(#gScr)" stroke="#3a7aa6"/><rect x="7" y="13" width="2" height="1" fill="#c8d0d8"/><rect x="4" y="14" width="8" height="1" fill="#8aa0b8"/><rect x="5" y="8" width="11" height="8" fill="#fff" opacity=".0"/><rect x="15" y="7" width="1" height="10" fill="#9a9a9a"/><rect x="6" y="9" width="9" height="6" fill="url(#gPcb)"/><rect x="9" y="11" width="3" height="2" fill="#3a2a30"/><rect x="8" y="10" width="1" height="1" fill="#d8e8dc"/><rect x="12" y="10" width="1" height="1" fill="#d8e8dc"/><rect x="8" y="13" width="1" height="1" fill="#d8e8dc"/><rect x="13" y="12" width="1" height="1" fill="#d8e8dc"/><rect x="7" y="15" width="6" height="2" fill="#f5a800"/><path d="M8.500 15v2M10 15v2M11.500 15v2" stroke="#fbd070" stroke-width=".5"/></svg><span class="tx" style="left:64px"><span class="c">显示适配器</span></span></div>
  </div>
  <div id="status"><i style="left:550px"></i><i style="left:683px"></i><i style="left:768px"></i></div>
 </div>
</div>
<div id="task">
 <svg class="abs" style="left:16px;top:12px" width="16" height="16" viewBox="0 0 16 16"><path d="M0 2.300L6.500 1.400V7.600H0ZM7.300 1.300L16 0V7.600H7.300ZM0 8.400H6.500V14.600L0 13.700ZM7.300 8.400H16V16L7.300 14.700Z" fill="#fff"/></svg>
 <div id="tbtn">
  <svg class="abs" style="left:10px;top:8px" width="24" height="24" viewBox="61 736 24 24">
   <path d="M69.100 740.700L77.600 738.100L83.200 740.200L75.700 742.100Z" fill="#e6e6e6"/>
   <path d="M69.100 740.700L75.700 742.100V752.500L69.100 750Z" fill="#d4d4d4"/>
   <path d="M75.700 742.100L83.200 740.200V753.300L75.700 755.500Z" fill="#b4b4b4"/>
   <path d="M77 753.800L83.200 752V753.500L77 755.300Z" fill="#3c3c3c"/>
   <path d="M70.100 742.200L75 743.300V749.500L70.100 748.200Z" fill="#353535"/>
   <path d="M71.300 743.700L73.900 744.300V746.700L71.300 746.100Z" fill="#28d840"/>
   <path d="M62.300 748.200L67 746.600L77 749.300L72 751.300Z" fill="#ececec"/>
   <path d="M66.500 747.500L69 746.800L73 748.300L72.500 749L69 748.200Z" fill="#1e1e1e"/>
   <path d="M62.300 748.200L72 751.300V758L62.300 754.600Z" fill="#dadada"/>
   <path d="M72 751.300L77 749.300V756L72 758Z" fill="#c2c2c2"/>
   <path d="M64.100 750.300L65.600 750.800V753.400L64.100 752.900Z" fill="#6a6a6a"/>
   <path d="M69 752L70.500 752.500V755.200L69 754.700Z" fill="#6a6a6a"/>
  </svg>
  <span class="t"><span class="c">设备管理器</span></span><div class="ul"></div>
 </div>
 <!-- tray -->
 <svg class="abs" style="left:820px;top:0" width="104" height="40" viewBox="820 728 104 40">
  <g fill="none" stroke="#fff" stroke-width="1">
   <path d="M831.500 744.500V740.500H837.500V744.500"/>
   <path d="M836.500 755.500H830.500V744.500H838.500V751"/>
   <path d="M836.800 753.800L839 756L843.300 751.300"/>
   <circle cx="859.100" cy="747.800" r="7.300"/>
   <ellipse cx="859.100" cy="747.800" rx="3.300" ry="7.300"/>
   <path d="M852.300 745.300H866M852.300 750.500H860.500"/>
   <path d="M875.300 745.200H877.800L880.500 742.500V753.300L877.800 750.600H875.300Z"/>
  </g>
  <circle cx="863.600" cy="752.400" r="3.900" fill="#002d55"/>
  <circle cx="863.600" cy="752.400" r="2.900" fill="none" stroke="#fff" stroke-width="1"/>
  <path d="M861.600 750.400L865.600 754.400" stroke="#fff" stroke-width="1"/>
  <circle cx="886.500" cy="751.500" r="4.300" fill="#e81123"/>
  <path d="M884.300 749.300L888.700 753.700M888.700 749.300L884.300 753.700" stroke="#fff" stroke-width="1.200"/>
  <rect x="834" y="742" width="1" height="1" fill="#fff"/><rect x="836" y="742" width="1" height="1" fill="#fff"/>
 </svg>
 <div class="abs" style="left:895px;top:0;width:20px;text-align:center;font-size:16.6px;line-height:41px"><span style="display:inline-block;transform:scaleY(.9)">英</span></div>
 <div class="abs clk" style="left:918px;top:2px;width:100px;text-align:center;font-size:12px;line-height:19px"><span style="letter-spacing:.3px"><span class="c">下午</span> 08:16:23</span><br><span style="letter-spacing:.9px;margin-left:.5px">2024/7/11/<span class="c">周四</span></span></div>
 <div class="abs" style="left:1019px;top:0;width:1px;height:40px;background:#8693a3"></div>
</div>

</body>
</html>
